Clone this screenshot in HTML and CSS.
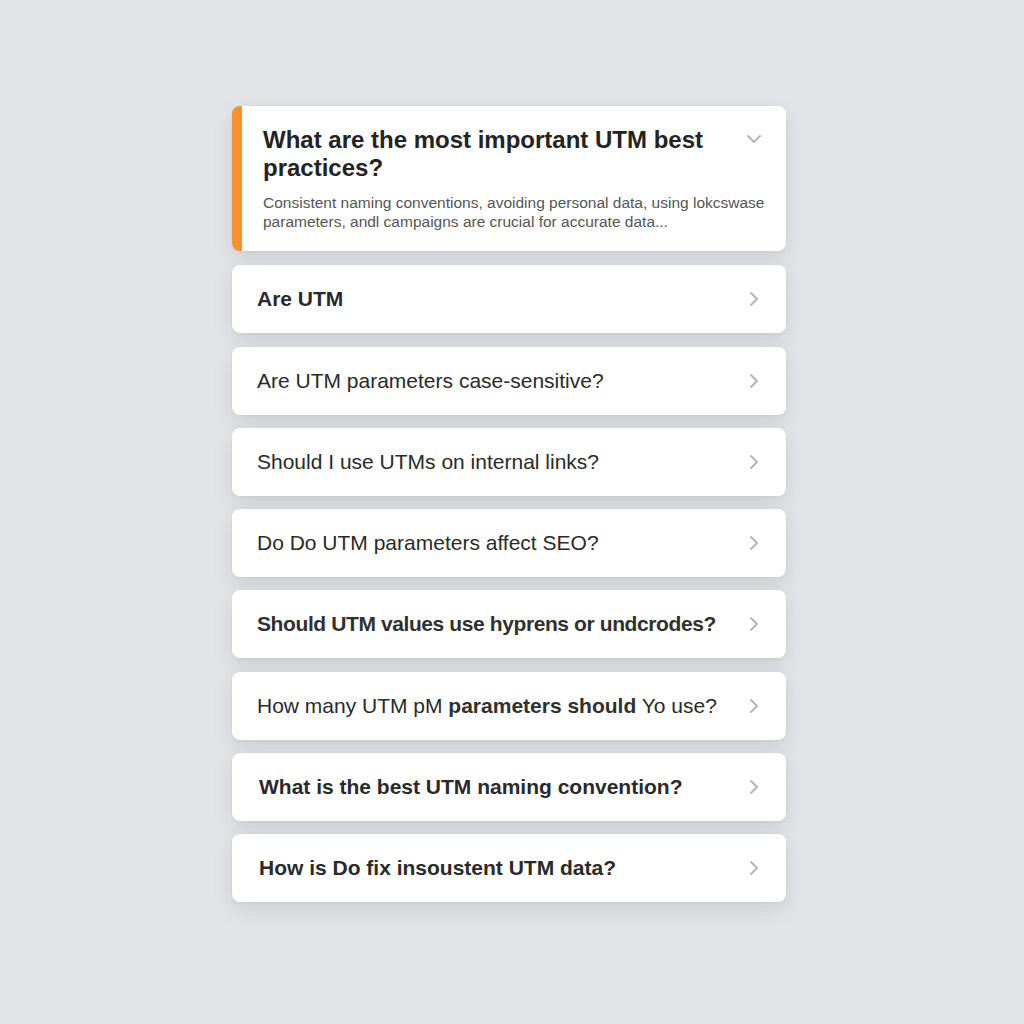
FILE: index.html
```html
<!DOCTYPE html>
<html lang="en">
  <head>
    <meta charset="UTF-8" />
    <meta name="viewport" content="width=device-width, initial-scale=1.0" />
    <title>UTM FAQ</title>
    <link rel="stylesheet" href="styles.css">
  </head>
  <body>
    <div class="faq-list">
      <div class="faq-item open">
        <div class="faq-head">
          <h2 class="faq-title">What are the most important UTM best practices?</h2>
          <svg class="chev chev-down" width="16" height="10" viewBox="0 0 16 10"><path d="M2 2l6 6 6-6" /></svg>
        </div>
        <p class="faq-answer">Consistent naming conventions, avoiding personal data, using lokcswase parameters, andl campaigns are crucial for accurate data...</p>
      </div>
      <div class="faq-item">
        <span class="faq-q semi">Are UTM</span>
        <svg class="chev" width="10" height="16" viewBox="0 0 10 16"><path d="M2 2l6 6-6 6" /></svg>
      </div>
      <div class="faq-item">
        <span class="faq-q">Are UTM parameters case-sensitive?</span>
        <svg class="chev" width="10" height="16" viewBox="0 0 10 16"><path d="M2 2l6 6-6 6" /></svg>
      </div>
      <div class="faq-item">
        <span class="faq-q">Should I use UTMs on internal links?</span>
        <svg class="chev" width="10" height="16" viewBox="0 0 10 16"><path d="M2 2l6 6-6 6" /></svg>
      </div>
      <div class="faq-item">
        <span class="faq-q">Do Do UTM parameters affect SEO?</span>
        <svg class="chev" width="10" height="16" viewBox="0 0 10 16"><path d="M2 2l6 6-6 6" /></svg>
      </div>
      <div class="faq-item">
        <span class="faq-q medium tight">Should UTM values use hyprens or undcrodes?</span>
        <svg class="chev" width="10" height="16" viewBox="0 0 10 16"><path d="M2 2l6 6-6 6" /></svg>
      </div>
      <div class="faq-item">
        <span class="faq-q">How many UTM pM <span class="medium">parameters should</span> Yo use?</span>
        <svg class="chev" width="10" height="16" viewBox="0 0 10 16"><path d="M2 2l6 6-6 6" /></svg>
      </div>
      <div class="faq-item">
        <span class="faq-q semi indent">What is the best UTM naming convention?</span>
        <svg class="chev" width="10" height="16" viewBox="0 0 10 16"><path d="M2 2l6 6-6 6" /></svg>
      </div>
      <div class="faq-item">
        <span class="faq-q semi indent">How is Do fix insoustent UTM data?</span>
        <svg class="chev" width="10" height="16" viewBox="0 0 10 16"><path d="M2 2l6 6-6 6" /></svg>
      </div>
    </div>
  </body>
</html>
```

FILE: styles.css
```css
* {
  margin: 0;
  padding: 0;
  box-sizing: border-box;
}
body {
  background-color: #e2e4e7;
  font-family: "Liberation Sans", Arial, sans-serif;
  color: #262626;
  height: 1024px;
}
.faq-list {
  width: 554px;
  margin: 106px 0 0 232px;
  display: flex;
  flex-direction: column;
  gap: 13.3px;
}
.faq-item {
  background-color: #fff;
  border-radius: 8px;
  height: 68px;
  display: flex;
  align-items: center;
  justify-content: space-between;
  padding: 0 27px 0 25px;
  box-shadow: 0 8px 20px rgba(60, 70, 80, 0.13), 0 1px 3px rgba(60, 70, 80, 0.06);
}
.faq-item.open {
  height: 145px;
  display: block;
  border-left: 10px solid #f7912d;
  padding: 20px 16px 0 21px;
  margin-bottom: 1px;
}
.faq-head {
  display: flex;
  justify-content: space-between;
  align-items: flex-start;
}
.faq-title {
  font-size: 24px;
  line-height: 28px;
  font-weight: bold;
  color: #232323;
  width: 450px;
}
.faq-answer {
  margin-top: 11px;
  font-size: 15.5px;
  line-height: 19px;
  color: #555;
}
.faq-q {
  font-size: 21px;
  color: #2a2a2a;
}
.semi,
.medium {
  font-weight: bold;
}
.medium {
  color: #303030;
}
.tight {
  letter-spacing: -0.4px;
}
.indent {
  margin-left: 2px;
}
.chev {
  flex-shrink: 0;
  fill: none;
  stroke: #b3b6ba;
  stroke-width: 2;
  stroke-linecap: round;
  stroke-linejoin: round;
}
.chev-down {
  margin: 8px 8px 0 0;
}
```
